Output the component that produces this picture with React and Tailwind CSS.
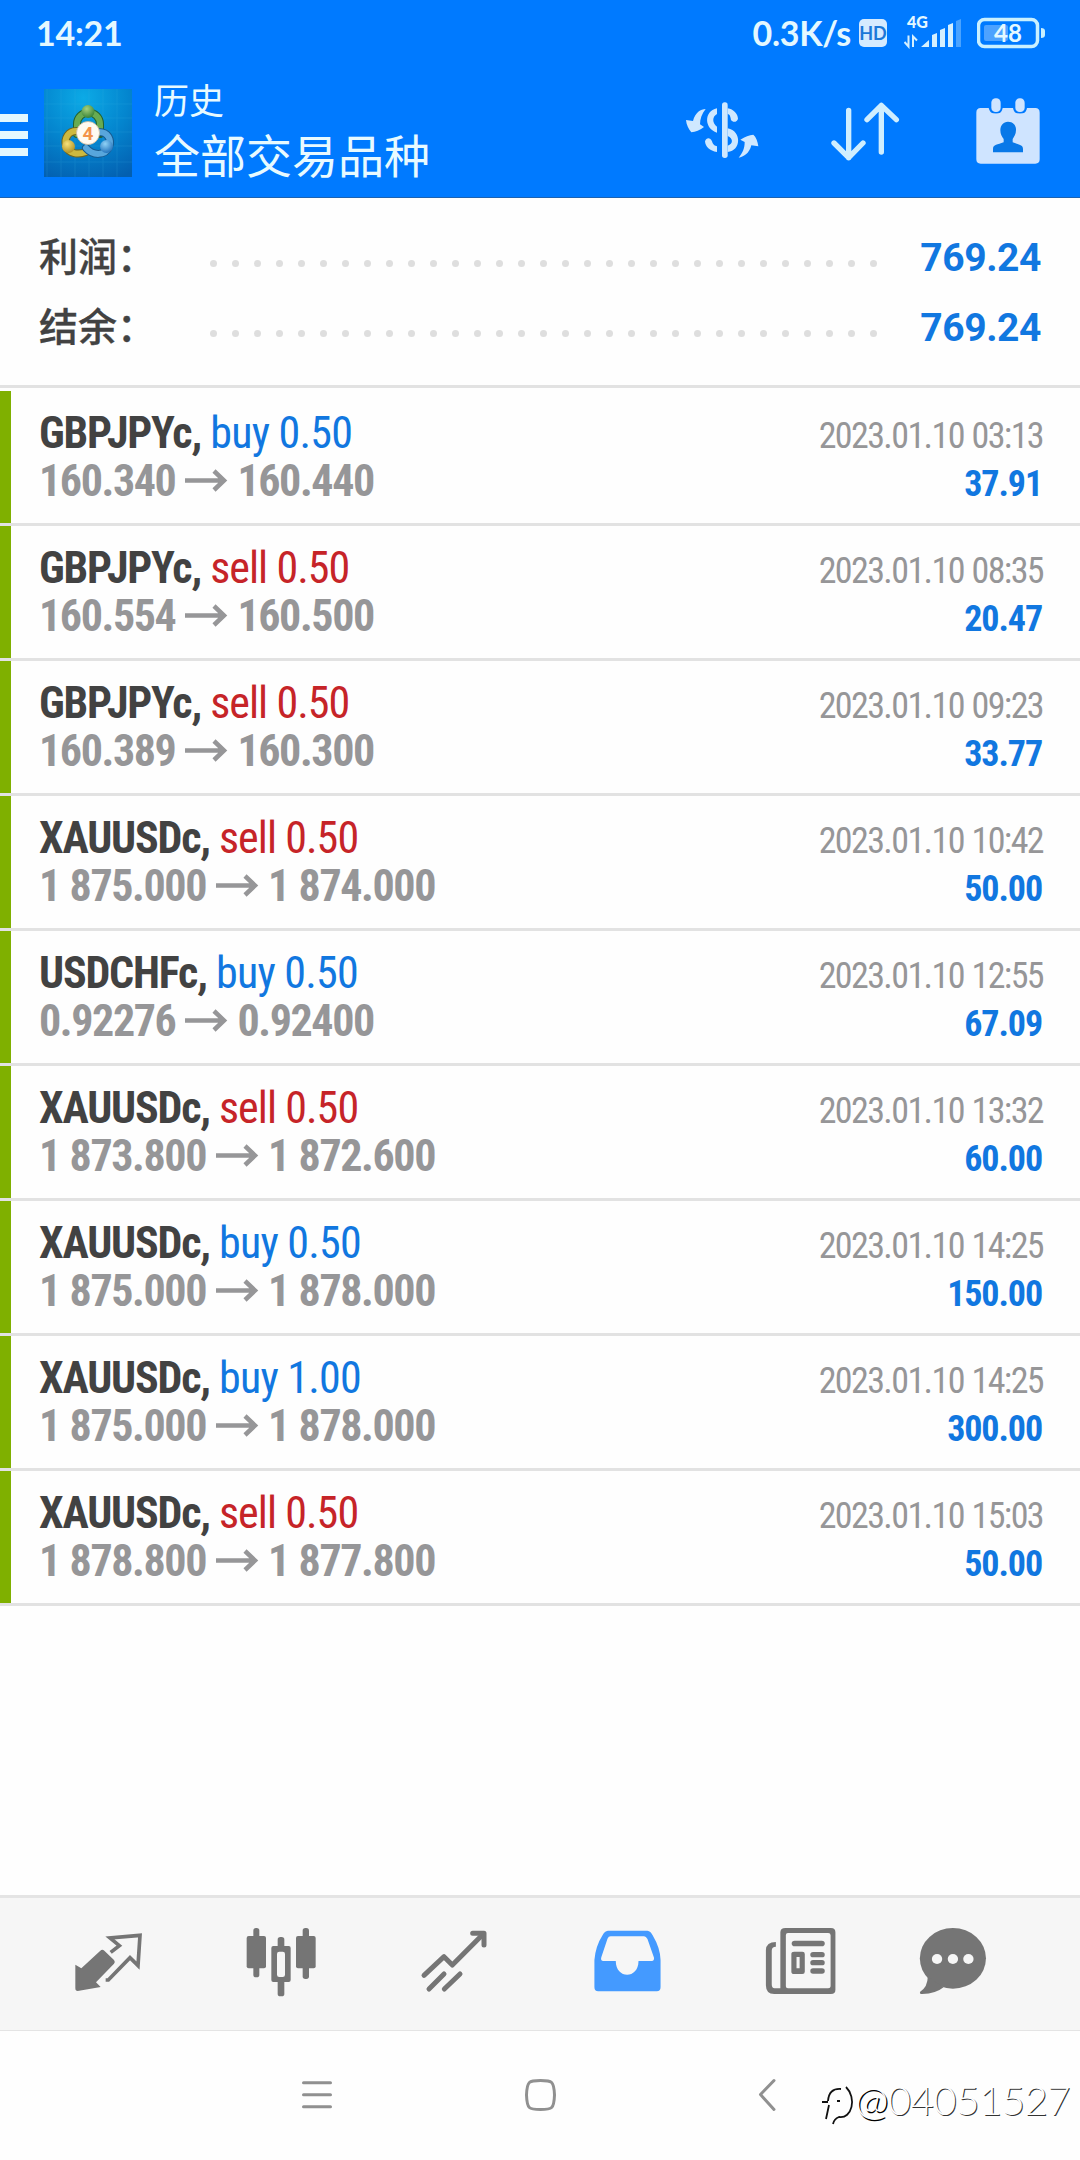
import React from "react";

const trades = [
  ["GBPJPYc", "buy", "0.50", "160.340", "160.440", "2023.01.10 03:13", "37.91"],
  ["GBPJPYc", "sell", "0.50", "160.554", "160.500", "2023.01.10 08:35", "20.47"],
  ["GBPJPYc", "sell", "0.50", "160.389", "160.300", "2023.01.10 09:23", "33.77"],
  ["XAUUSDc", "sell", "0.50", "1 875.000", "1 874.000", "2023.01.10 10:42", "50.00"],
  ["USDCHFc", "buy", "0.50", "0.92276", "0.92400", "2023.01.10 12:55", "67.09"],
  ["XAUUSDc", "sell", "0.50", "1 873.800", "1 872.600", "2023.01.10 13:32", "60.00"],
  ["XAUUSDc", "buy", "0.50", "1 875.000", "1 878.000", "2023.01.10 14:25", "150.00"],
  ["XAUUSDc", "buy", "1.00", "1 875.000", "1 878.000", "2023.01.10 14:25", "300.00"],
  ["XAUUSDc", "sell", "0.50", "1 878.800", "1 877.800", "2023.01.10 15:03", "50.00"],
];

function StatusBar() {
  return (
    <div className="flex h-[64px] items-start font-['Lato',sans-serif] text-[#e4f8ff]">
      <div className="ml-[36px] mt-[13px] whitespace-nowrap text-[34px] leading-[40px] font-bold tracking-[-0.2px]">14:21</div>
      <div className="ml-auto mt-[13px] whitespace-nowrap text-[34px] leading-[40px] font-bold tracking-[-0.3px]">0.3K/s</div>
      <div className="ml-[8px] mt-[19px] flex h-[28px] w-[28px] items-center justify-center rounded-[5px] bg-[#d5ebff] text-[18px] leading-[28px] font-bold text-[#1b78d8]">HD</div>
      <div className="ml-[17px] mt-[15px] flex w-[58px] flex-col">
        <div className="ml-[3px] h-[14px] text-[16px] leading-[14px] font-black">4G</div>
        <svg className="-mt-[10px]" width="58" height="30" viewBox="904 19 58 30" fill="#d5f0ff">
          <path d="M904.5 42l4 4.500V35.500M913 47V36.500l4 4" fill="none" stroke="#d5f0ff" strokeWidth="2" />
          <path d="M921 47l8-7v7zM932 47V35l5-2v14zM940 47V30l5-2v19zM948 47V25l5-2v24z" />
          <path d="M956 47V21l5-2v28z" opacity=".35" />
        </svg>
      </div>
      <svg className="ml-[15px] mr-[34px] mt-[17px]" width="69" height="32" viewBox="977 17 69 32">
        <rect x="978.500" y="19.500" width="59" height="27" rx="6" fill="none" stroke="#c9f0ff" strokeWidth="3.500" />
        <rect x="984" y="25" width="24" height="16" rx="2" fill="#4da2ff" />
        <path d="M1041 28q4 0 4 3v4q0 3-4 3z" fill="#c9f0ff" />
        <text x="1008" y="42" textAnchor="middle" fontFamily="Lato" fontWeight="700" fontSize="24" fill="#e4f8ff">48</text>
      </svg>
    </div>
  );
}

function AppLogo() {
  return (
    <svg width="88" height="88" viewBox="0 0 88 88">
      <defs>
        <radialGradient id="sky" cx=".45" cy=".1" r="1">
          <stop offset="0" stopColor="#0caae6" />
          <stop offset=".5" stopColor="#0486cf" />
          <stop offset="1" stopColor="#035fb0" />
        </radialGradient>
        <radialGradient id="green" cx=".4" cy=".3" r=".8"><stop offset="0" stopColor="#a4d07d" /><stop offset="1" stopColor="#2b7a2e" /></radialGradient>
        <radialGradient id="gold" cx=".4" cy=".3" r=".8"><stop offset="0" stopColor="#f6e27c" /><stop offset="1" stopColor="#a98818" /></radialGradient>
        <radialGradient id="blue" cx=".4" cy=".3" r=".8"><stop offset="0" stopColor="#8fd2f6" /><stop offset="1" stopColor="#1667b5" /></radialGradient>
      </defs>
      <rect width="88" height="88" fill="url(#sky)" />
      <path d="M3 0V88M17 0V88M31 0V88M45 0V88M59 0V88M73 0V88M0 15H88M0 29H88M0 43H88M0 57H88M0 73H88" stroke="#3db4e6" strokeWidth="1" opacity=".18" />
      <g fill="none" strokeLinecap="round">
        <path d="M33 45V35a11.500 11.500 0 0 1 23 0v10" stroke="#23622d" strokeWidth="8" />
        <path d="M33 45V35a11.500 11.500 0 0 1 23 0v9" stroke="#68ab52" strokeWidth="6" />
        <path d="M34 42C24 41 20 50 22 57c3 8 12 9 20 6" stroke="#6d6521" strokeWidth="8" />
        <path d="M34 42C24 41 20 50 22 57c3 8 12 9 20 6" stroke="#cdb93f" strokeWidth="6" />
        <path d="M55 43c9 0 13 8 10 15-4 9-16 9-23 1" stroke="#175a8f" strokeWidth="8" />
        <path d="M55 43c9 0 13 8 10 15-4 9-16 9-23 1" stroke="#58a6dc" strokeWidth="6" />
      </g>
      <circle cx="44" cy="22.500" r="6.500" fill="url(#green)" />
      <circle cx="24.500" cy="57.500" r="6.500" fill="url(#gold)" />
      <circle cx="62.500" cy="57.500" r="6.500" fill="url(#blue)" />
      <circle cx="44" cy="44" r="11.500" fill="#fffaf1" stroke="#cbb99c" strokeWidth=".8" />
      <text x="44" y="50.500" textAnchor="middle" fontFamily="Roboto" fontWeight="700" fontSize="19" fill="#f3934a">4</text>
    </svg>
  );
}

function Header() {
  return (
    <div className="flex h-[134px] items-start">
      <div className="mt-[50px] flex w-[28px] flex-col gap-[9.500px]">
        <div className="h-[7.500px] bg-[#e4f8ff]" />
        <div className="h-[7.500px] bg-[#e4f8ff]" />
        <div className="h-[7.500px] bg-[#e4f8ff]" />
      </div>
      <div className="ml-[16px] mt-[25px]"><AppLogo /></div>
      <div className="ml-[22px] mt-[15px] flex flex-col whitespace-nowrap font-['Noto_Sans_CJK_SC',sans-serif] font-normal text-[#e8faff]">
        <div className="text-[35px] leading-[40px]">历史</div>
        <div className="mt-[6px] text-[46px] leading-[56px]">全部交易品种</div>
      </div>
      <svg className="ml-auto mt-[36px]" width="77" height="60" viewBox="69 300 231 180" fill="#cfe8ff">
        <path d="M137 327C122 327 106 337 99 363L78 360C79 374 86 388 94 397Q113 396 132 381L120 373C120 356 126 341 137 327Z" />
        <path d="M236 473C250 471 268 461 274 436L295 439C293 423 288 411 280 404Q262 405 241 419L254 426C254 446 247 460 236 473Z" />
        <rect x="186" y="307" width="17" height="167" rx="8" />
        <path d="M171 325V342C156 350 156 369 171 380V398C133 387 130 334 171 325Z" />
        <path d="M203 325C221 328 233 341 234 356 232 366 219 369 213 360 211 348 209 343 203 342Z" />
        <path d="M171 456C149 453 136 440 135 424 139 412 151 412 156 424 159 435 165 438 171 439Z" />
        <path fillRule="evenodd" d="M203 385C246 393 244 453 203 456ZM203 408V437C220 432 220 415 203 408Z" />
      </svg>
      <svg className="ml-[70px] mt-[36px]" width="70" height="63" viewBox="510 300 210 189" fill="none" stroke="#cfeeff" strokeWidth="16" strokeLinecap="round" strokeLinejoin="round">
        <path d="M566 331V473M522 429L566 473L609 429M664 456V316M621 359L664 316L709 359" />
      </svg>
      <svg className="ml-[75px] mr-[39px] mt-[33px]" width="66" height="68" viewBox="945 291 198 204" fill="#cfe4ff">
        <path d="M962 324H986Q990 340 1001 340H1014Q1025 340 1028 324H1059Q1062 340 1073 340H1087Q1098 340 1101 324H1126Q1139 324 1139 338V478Q1139 491 1126 491H962Q949 491 949 478V338Q949 324 962 324Z" />
        <rect x="990" y="291" width="36" height="49" rx="17" fill="#007aff" />
        <rect x="1062" y="291" width="36" height="49" rx="17" fill="#007aff" />
        <rect x="994" y="295" width="28" height="41" rx="13" />
        <rect x="1066" y="295" width="28" height="41" rx="13" />
        <path fill="#0878e8" d="M1044 365C1059 365 1069 376 1068 390C1068 403 1062 411 1058 417V427C1076 434 1089 434 1089 447V457H999V447C999 434 1013 434 1031 427V417C1026 411 1021 403 1021 390C1021 376 1030 365 1044 365Z" />
      </svg>
    </div>
  );
}

function SummaryRow({ label, value }) {
  return (
    <div className="flex h-[70px] items-start pl-[39px] pr-[39px]">
      <div className="mt-[4px] w-[171px] whitespace-nowrap font-['Noto_Sans_CJK_SC',sans-serif] text-[39px] leading-[56px] font-medium text-[#424242] [-webkit-text-stroke:0.3px_#424242]">{label}</div>
      <div className="mt-[38px] flex gap-[15px]">
        {Array.from({ length: 31 }, (_, i) => <span key={i} className="h-[7px] w-[7px] rounded-full bg-[#dedede]" />)}
      </div>
      <div className="ml-auto mt-[8px] font-['Roboto',sans-serif] text-[39px] leading-[56px] font-bold tracking-[-0.4px] text-[#1177e0]">{value}</div>
    </div>
  );
}

function TradeRow({ trade }) {
  const [symbol, side, volume, from, to, time, profit] = trade;
  return (
    <div className="flex h-[135px] border-b-[3px] border-[#e2e2e2]">
      <div className="h-[132px] w-[11px] shrink-0 bg-[#7fb000]" />
      <div className="flex grow justify-between pl-[28px] pr-[38px] pt-[18px] font-['Roboto_Condensed','Roboto',sans-serif] [font-stretch:75%] whitespace-nowrap">
        <div>
          <div className="text-[44px] leading-[48px] font-bold tracking-[-1.2px] text-[#424242]">
            {symbol},<span className={side === "buy" ? "font-normal tracking-[-0.8px] text-[#1177e0]" : "font-normal tracking-[-0.95px] text-[#c62428]"}> {side} {volume}</span>
          </div>
          <div className="flex items-center text-[44px] leading-[48px] font-bold tracking-[-1.4px] [word-spacing:1px] text-[#969698]">
            <span>{from}</span>
            <svg className="ml-[10px] mr-[8px]" width="44" height="24" viewBox="0 0 44 24" fill="none" stroke="#969698" strokeWidth="4.500">
              <path d="M0 11.500H39M29 2L39 11.500L29 21" />
            </svg>
            <span>{to}</span>
          </div>
        </div>
        <div className="text-right text-[36px] leading-[48px]">
          <div className="-mr-px pt-[3px] tracking-[-1.6px] [word-spacing:1px] text-[#969698]">{time}</div>
          <div className="font-bold tracking-[-1.1px] text-[#1177e0]">{profit}</div>
        </div>
      </div>
    </div>
  );
}

function TabBar() {
  return (
    <div className="flex h-[136px] items-start border-t-[3px] border-b border-[#e4e4e4] bg-[#f6f6f6]">
      <svg className="ml-[73px] mt-[32px]" width="71" height="64" viewBox="99 150 213 192" fill="#757575">
        <path d="M106 254L124 265L181 212Q187 207 193 212L222 240Q227 246 222 251L168 307L182 321L113 333Q106 333 106 325Z" />
        <path fill="none" stroke="#757575" strokeWidth="11" d="M197 300H205L270 233L294 257L300 166L210 174L238 197L212 217" />
      </svg>
      <svg className="ml-[101px] mt-[28px]" width="73" height="72" viewBox="615 138 219 216" fill="#757575">
        <rect x="640" y="144" width="18" height="148" rx="8" /><rect x="620" y="168" width="58" height="97" rx="6" />
        <rect x="788" y="144" width="19" height="153" rx="8" /><rect x="768" y="168" width="59" height="97" rx="6" />
        <rect x="713" y="171" width="20" height="178" rx="8" /><rect x="694" y="198" width="58" height="108" rx="6" />
        <rect x="711" y="215" width="24" height="76" rx="7" fill="#f6f6f6" />
      </svg>
      <svg className="ml-[102px] mt-[31px]" width="69" height="64" viewBox="1140 147 207 192" fill="none" stroke="#757575" strokeWidth="15" strokeLinecap="round" strokeLinejoin="round">
        <path d="M1152 286L1212 230L1237 255L1329 163" />
        <path d="M1298 160H1332V195" />
        <path d="M1167 327L1212 282M1213 327L1260 282" />
      </svg>
      <svg className="ml-[103px] mt-[31px]" width="72" height="64" viewBox="151 147 209 192" preserveAspectRatio="none" fill="#449aff">
        <path fillRule="evenodd" d="M197 152H312Q321 153 327 166Q349 204 350 240V322Q350 334 339 334H169Q158 334 158 322V240Q161 199 182 165Q188 153 197 152ZM205 169Q199 169 196 176L178 232Q175 243 184 243H220C220 298 286 298 286 243H325Q332 242 331 233L312 177Q308 169 302 169Z" />
      </svg>
      <svg className="ml-[100px] mt-[28px]" width="74" height="70" viewBox="650.5 138 215 210" preserveAspectRatio="none" fill="#757575">
        <path fillRule="evenodd" d="M713 144H845Q858 144 858 157V329Q858 342 845 342H680Q656 342 656 316V210Q657 186 685 186V200Q673 200 673 212V313Q673 325 681 325H698V157Q698 144 713 144ZM720 159Q714 159 714 165V319Q714 325 720 325H837Q844 325 844 319V166Q844 159 837 159Z" />
        <rect x="731" y="182" width="96" height="17" rx="8.500" />
        <path fillRule="evenodd" d="M738 215H762Q769 215 769 222V275Q769 282 762 282H738Q730 282 730 275V222Q730 215 738 215ZM745 231V265H754V231Z" />
        <rect x="785" y="216" width="42" height="16" rx="8" /><rect x="785" y="240" width="42" height="16" rx="8" /><rect x="785" y="265" width="42" height="16" rx="8" />
      </svg>
      <svg className="ml-[79px] mt-[28px]" width="72" height="70" viewBox="1094.8 138 209 210" preserveAspectRatio="none" fill="#757575">
        <ellipse cx="1199" cy="235" rx="96" ry="91" />
        <path d="M1126 290Q1126 320 1104 335Q1101 342 1110 342Q1150 341 1172 322Z" />
        <circle cx="1153" cy="237" r="15" fill="#f6f6f6" /><circle cx="1199" cy="237" r="15" fill="#f6f6f6" /><circle cx="1244" cy="237" r="15" fill="#f6f6f6" />
      </svg>
    </div>
  );
}

function SystemNav() {
  return (
    <div className="flex h-[129px] items-start bg-[#fefefe]">
      <svg className="ml-[302px] mt-[48px]" width="30" height="32" viewBox="0 0 30 32" fill="none" stroke="#909090" strokeWidth="3" strokeLinecap="round">
        <path d="M1.500 3.700H28.500M1.500 15.700H28.500M1.500 27.700H28.500" />
      </svg>
      <svg className="ml-[192px] mt-[47px]" width="33" height="34" viewBox="0 0 33 34" fill="none" stroke="#909090" strokeWidth="3">
        <path d="M16.500 2.500C28 2.500 30 3 30.500 17C30 31 28 31.500 16.500 31.500S3 31 2.500 17C3 3 5 2.500 16.500 2.500Z" />
      </svg>
      <svg className="ml-[201px] mt-[47px]" width="20" height="34" viewBox="0 0 20 34" fill="none" stroke="#909090" strokeWidth="3" strokeLinecap="round" strokeLinejoin="round">
        <path d="M16 2.500L2.500 16.500L16 31.500" />
      </svg>
      <svg className="ml-[42px] mt-[52px]" width="36" height="44" viewBox="820 2083 36 44" fill="none" stroke="#111" strokeWidth="1.800">
        <path d="M822 2102H828M841 2089Q829 2088 828 2101M829 2105L826 2119M837 2101H840M846 2087C857 2098 852 2119 839 2117Q834 2119 833 2124" />
      </svg>
      <div className="-ml-[1px] mt-[43px] font-['Lato',sans-serif] text-[40px] leading-[52px] font-light tracking-[-0.4px] whitespace-nowrap text-white [text-shadow:1px_1px_0_#333]"><span className="[text-shadow:1.5px_1.5px_0_#000]">@</span>04051527</div>
    </div>
  );
}

export default function App() {
  return (
    <div className="flex h-[2160px] w-[1080px] flex-col overflow-hidden bg-[#fefefe]">
      <div className="h-[198px] shrink-0 border-b border-[#1d62b0] bg-[#007aff]">
        <StatusBar />
        <Header />
      </div>
      <div className="h-[190px] shrink-0 border-b-[3px] border-[#e2e2e2] pt-[24px]">
        <SummaryRow label="利润：" value="769.24" />
        <SummaryRow label="结余：" value="769.24" />
      </div>
      <div className="shrink-0 pt-[3px]">
        {trades.map((trade, i) => <TradeRow key={i} trade={trade} />)}
      </div>
      <div className="mt-auto shrink-0">
        <TabBar />
        <SystemNav />
      </div>
    </div>
  );
}
